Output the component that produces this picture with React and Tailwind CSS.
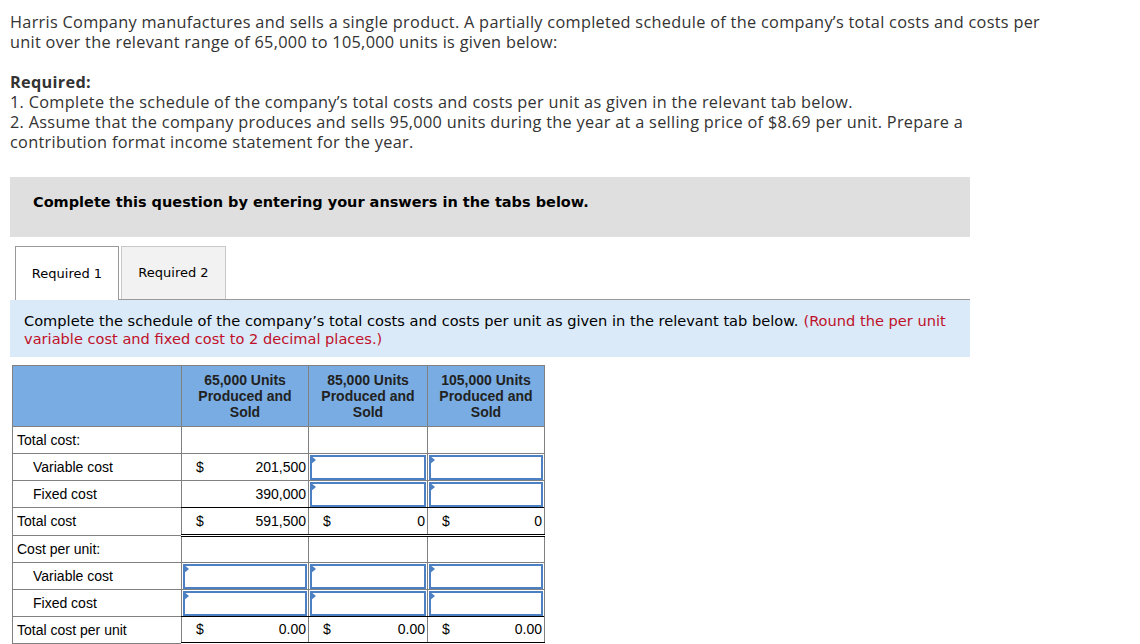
import React from "react";

const Inp = () => (
  <div className="relative h-[25px] border-2 border-[#4d80c2] bg-white mx-[1px]">
    <div className="absolute left-[-2px] top-[-2px] w-0 h-0 border-t-[5px] border-b-[5px] border-l-[6px] border-t-transparent border-b-transparent border-l-[#4d80c2]" />
  </div>
);

const Num = ({ d, v }) => (
  <div className="flex justify-between px-[4px] pr-[2px]">
    <span className="pl-[10px]">{d ? "$" : ""}</span>
    <span>{v}</span>
  </div>
);

export default function App() {
  const gray = "border border-[#808080]";
  const row = "h-[27px]";
  const tot = "border-l border-[#808080] border-t border-t-black border-b-[3px] border-b-black border-double";
  const totR = "border-l border-r border-[#808080] border-t border-t-black border-b-[3px] border-b-black border-double";
  return (
    <div className="w-[1140px] h-[644px] overflow-hidden bg-white text-[#2b2b2b]">
      <div className="px-[10px] pt-[12px] text-[16.3px] tracking-[0.3px] leading-[20px] font-['Open_Sans',sans-serif] text-[#333]">
        <p className="w-[1045px]">
          Harris Company manufactures and sells a single product. A partially completed schedule of the company’s total costs and costs per unit over the relevant range of 65,000 to 105,000 units is given below:
        </p>
        <p className="mt-[20px] font-bold">Required:</p>
        <p>1. Complete the schedule of the company’s total costs and costs per unit as given in the relevant tab below.</p>
        <p className="w-[975px]">
          2. Assume that the company produces and sells 95,000 units during the year at a selling price of $8.69 per unit. Prepare a contribution format income statement for the year.
        </p>
      </div>

      <div className="ml-[10px] mt-[25px] w-[960px] h-[60px] bg-[#dfdfdf] flex items-center pl-[23px] pb-[9px] font-['DejaVu_Sans',sans-serif] font-bold text-[14.5px] text-black">
        Complete this question by entering your answers in the tabs below.
      </div>

      <div className="ml-[15px] mt-[9px] w-[955px] flex items-end border-b border-[#999] font-['DejaVu_Sans',sans-serif] text-[13px] text-black">
        <div className="w-[104px] h-[54px] border border-b-0 border-[#999] bg-white flex items-center justify-center -mb-[1px] pt-[1px]">Required 1</div>
        <div className="ml-[2px] w-[105px] h-[53px] border border-b-0 border-[#c8c8c8] bg-[#f2f2f2] flex items-center justify-center">Required 2</div>
      </div>

      <div className="ml-[10px] w-[960px] h-[57px] bg-[#daeaf8] px-[14px] pt-[12px] font-['DejaVu_Sans',sans-serif] text-[14.6px] leading-[18px] text-black">
        <div className="flex gap-[5px] whitespace-nowrap">
          <span>Complete the schedule of the company’s total costs and costs per unit as given in the relevant tab below.</span>
          <span className="text-[#c0102a]">(Round the per unit</span>
        </div>
        <div className="text-[#c0102a]">variable cost and fixed cost to 2 decimal places.)</div>
      </div>

      <table className="ml-[12px] mt-[8px] border-collapse font-['Liberation_Sans',Arial,sans-serif] text-[14px] text-black">
        <colgroup>
          <col className="w-[169px]" />
          <col className="w-[127px]" />
          <col className="w-[119px]" />
          <col className="w-[117px]" />
        </colgroup>
        <thead>
          <tr className="h-[61px] bg-[#78ace3] font-bold text-[#222] leading-[16px]">
            <th className={gray}></th>
            <th className={gray + " align-top pt-[6px]"}>65,000 Units<br />Produced and<br />Sold</th>
            <th className={gray + " align-top pt-[6px]"}>85,000 Units<br />Produced and<br />Sold</th>
            <th className={gray + " align-top pt-[6px]"}>105,000 Units<br />Produced and<br />Sold</th>
          </tr>
        </thead>
        <tbody>
          <tr className={row}>
            <td className={gray + " pl-[4px]"}>Total cost:</td>
            <td className={gray}></td>
            <td className={gray}></td>
            <td className={gray}></td>
          </tr>
          <tr className={row}>
            <td className={gray + " pl-[20px]"}>Variable cost</td>
            <td className={gray}><Num d v="201,500" /></td>
            <td className={gray + " p-0"}><Inp /></td>
            <td className={gray + " p-0"}><Inp /></td>
          </tr>
          <tr className={row}>
            <td className={gray + " pl-[20px]"}>Fixed cost</td>
            <td className={gray}><Num v="390,000" /></td>
            <td className={gray + " p-0"}><Inp /></td>
            <td className={gray + " p-0"}><Inp /></td>
          </tr>
          <tr className="h-[28px]">
            <td className={gray + " pl-[4px]"}>Total cost</td>
            <td className={tot}><Num d v="591,500" /></td>
            <td className={tot}><Num d v="0" /></td>
            <td className={totR}><Num d v="0" /></td>
          </tr>
          <tr className={row}>
            <td className={gray + " pl-[4px]"}>Cost per unit:</td>
            <td className={gray}></td>
            <td className={gray}></td>
            <td className={gray}></td>
          </tr>
          <tr className={row}>
            <td className={gray + " pl-[20px]"}>Variable cost</td>
            <td className={gray + " p-0"}><Inp /></td>
            <td className={gray + " p-0"}><Inp /></td>
            <td className={gray + " p-0"}><Inp /></td>
          </tr>
          <tr className={row}>
            <td className={gray + " pl-[20px]"}>Fixed cost</td>
            <td className={gray + " p-0"}><Inp /></td>
            <td className={gray + " p-0"}><Inp /></td>
            <td className={gray + " p-0"}><Inp /></td>
          </tr>
          <tr className={row}>
            <td className={gray + " pl-[4px]"}>Total cost per unit</td>
            <td className={tot}><Num d v="0.00" /></td>
            <td className={tot}><Num d v="0.00" /></td>
            <td className={totR}><Num d v="0.00" /></td>
          </tr>
        </tbody>
      </table>
    </div>
  );
}
